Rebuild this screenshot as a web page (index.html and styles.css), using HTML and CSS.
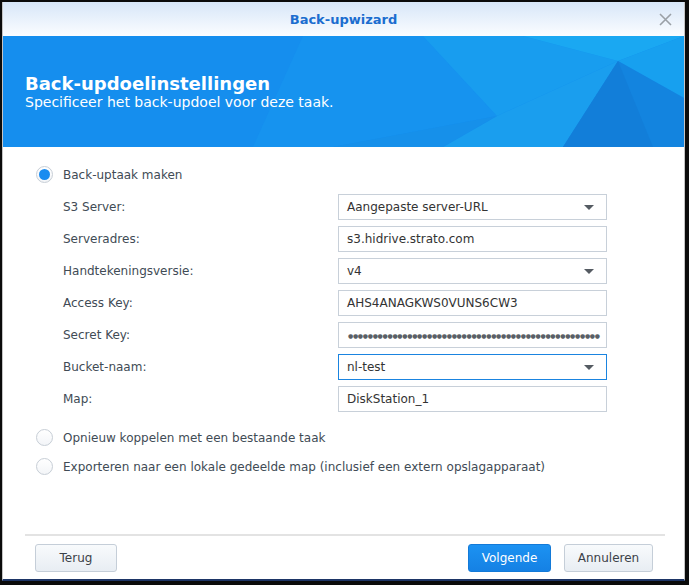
FILE: index.html
```html
<!DOCTYPE html>
<html lang="nl">
  <head>
    <meta charset="UTF-8" />
    <meta name="viewport" content="width=device-width, initial-scale=1.0" />
    <title>Back-upwizard</title>
    <link rel="stylesheet" href="styles.css">
  </head>
  <body>
    <div class="window">
      <header class="titlebar">
        <span></span>
        <h1>Back-upwizard</h1>
        <button class="close-btn" aria-label="Sluiten">
          <svg width="13" height="13" viewBox="0 0 13 13">
            <path d="M1 1 L12 12 M12 1 L1 12" stroke="#9aa0a6" stroke-width="1.6" fill="none" />
          </svg>
        </button>
      </header>

      <div class="banner">
        <svg class="banner-art" width="681" height="111" viewBox="0 0 681 111" preserveAspectRatio="none">
          <polygon points="300,0 420,0 494,80 330,111 250,111" fill="#1693ef" />
          <polygon points="420,0 520,0 615,25 494,80" fill="#189def" />
          <polygon points="520,0 681,0 615,25" fill="#1aa8f2" />
          <polygon points="615,25 681,0 681,62" fill="#17a0ef" />
          <polygon points="494,80 615,25 560,111 440,111" fill="#1a9eee" />
          <polygon points="615,25 681,62 681,111 560,111" fill="#1384df" />
          <polygon points="615,25 650,111 560,111" fill="#127ed9" />
          <polygon points="330,111 494,80 440,111" fill="#1690ea" />
        </svg>
        <h2>Back-updoelinstellingen</h2>
        <p>Specificeer het back-updoel voor deze taak.</p>
      </div>

      <div class="content">
        <label class="radio-row">
          <span class="radio checked"></span>
          Back-uptaak maken
        </label>

        <div class="form">
          <span class="field-label">S3 Server:</span>
          <div class="input select">Aangepaste server-URL<span class="caret"></span></div>

          <span class="field-label">Serveradres:</span>
          <div class="input">s3.hidrive.strato.com</div>

          <span class="field-label">Handtekeningsversie:</span>
          <div class="input select">v4<span class="caret"></span></div>

          <span class="field-label">Access Key:</span>
          <div class="input">AHS4ANAGKWS0VUNS6CW3</div>

          <span class="field-label">Secret Key:</span>
          <div class="input password">●●●●●●●●●●●●●●●●●●●●●●●●●●●●●●●●●●●●●●●●●●●●●●●●●●●</div>

          <span class="field-label">Bucket-naam:</span>
          <div class="input select focused">nl-test<span class="caret"></span></div>

          <span class="field-label">Map:</span>
          <div class="input">DiskStation_1</div>
        </div>

        <label class="radio-row spaced">
          <span class="radio"></span>
          Opnieuw koppelen met een bestaande taak
        </label>
        <label class="radio-row">
          <span class="radio"></span>
          Exporteren naar een lokale gedeelde map (inclusief een extern opslagapparaat)
        </label>
      </div>

      <footer class="footer">
        <button class="btn back">Terug</button>
        <div class="footer-right">
          <button class="btn primary">Volgende</button>
          <button class="btn cancel">Annuleren</button>
        </div>
      </footer>
    </div>
  </body>
</html>
```

FILE: styles.css
```css
* {
  margin: 0;
  padding: 0;
  box-sizing: border-box;
  font-family: "DejaVu Sans", Verdana, sans-serif;
}

body {
  background: #0b0b0b;
  width: 689px;
  height: 585px;
  overflow: hidden;
  padding: 2px 0 0 2px;
}

.window {
  width: 683px;
  height: 579px;
  background: white;
  border-left: 1px solid #c4c4c4;
  border-right: 1px solid #c4c4c4;
  border-bottom: 2px solid #1d3566;
  display: flex;
  flex-direction: column;
}

.titlebar {
  height: 34px;
  display: grid;
  grid-template-columns: 1fr auto 1fr;
  align-items: center;
  background: linear-gradient(to bottom, #d7e6f8, #fbfdff);
}

.titlebar h1 {
  font-size: 13px;
  font-weight: bold;
  color: #1b6dcf;
}

.close-btn {
  justify-self: end;
  margin-right: 12px;
  width: 13px;
  height: 13px;
  background: none;
  border: none;
  display: flex;
}

.banner {
  height: 111px;
  position: relative;
  overflow: hidden;
  background: #158eee;
  color: white;
  padding: 37px 20px 0 22px;
}

.banner-art {
  position: absolute;
  left: 0;
  top: 0;
}

.banner h2,
.banner p {
  position: relative;
}

.banner h2 {
  font-size: 18px;
  font-weight: bold;
  line-height: 21px;
}

.banner p {
  font-size: 14px;
  line-height: 17px;
}

.content {
  padding: 19px 0 0 33px;
  color: #414b55;
  font-size: 12px;
}

.radio-row {
  display: flex;
  align-items: center;
  gap: 10px;
  height: 17px;
}

.radio-row.spaced {
  margin-top: 17px;
  margin-bottom: 12px;
}

.radio {
  width: 17px;
  height: 17px;
  border-radius: 50%;
  border: 1px solid #c7ced6;
  background: linear-gradient(to bottom, #ffffff, #f3f5f8);
  position: relative;
}

.radio.checked::after {
  content: "";
  position: absolute;
  left: 2px;
  top: 2px;
  width: 11px;
  height: 11px;
  border-radius: 50%;
  background: #1a8cf0;
}

.form {
  display: grid;
  grid-template-columns: 275px 269px;
  row-gap: 6px;
  margin: 11px 0 0 27px;
  align-items: center;
}

.input {
  height: 26px;
  border: 1px solid #c8d0d9;
  padding: 0 8px;
  display: flex;
  align-items: center;
  color: #333;
  font-size: 12px;
  white-space: nowrap;
  overflow: hidden;
}

.input.select {
  justify-content: space-between;
}

.input.focused {
  border-color: #1a84e0;
}

.caret {
  width: 0;
  height: 0;
  border-left: 5px solid transparent;
  border-right: 5px solid transparent;
  border-top: 5px solid #555b62;
  margin-right: 4px;
}

.input.password {
  color: #5a5f66;
  font-size: 6px;
  letter-spacing: -0.3px;
  padding-left: 9px;
}

.footer {
  margin: auto 19px 0 22px;
  border-top: 2px solid #e3e3e3;
  padding: 8px 12px 7px 10px;
  display: flex;
  justify-content: space-between;
}

.footer-right {
  display: flex;
  gap: 13px;
}

.btn {
  height: 28px;
  border: 1px solid #c5ced8;
  border-radius: 3px;
  background: linear-gradient(to bottom, #f8fafc, #e8edf3);
  color: #3b4148;
  font-size: 12px;
}

.btn.back {
  width: 82px;
}

.btn.primary {
  width: 83px;
  background: linear-gradient(to bottom, #1c92f2, #1581e4);
  border-color: #137ad8;
  color: white;
}

.btn.cancel {
  width: 89px;
}
```
